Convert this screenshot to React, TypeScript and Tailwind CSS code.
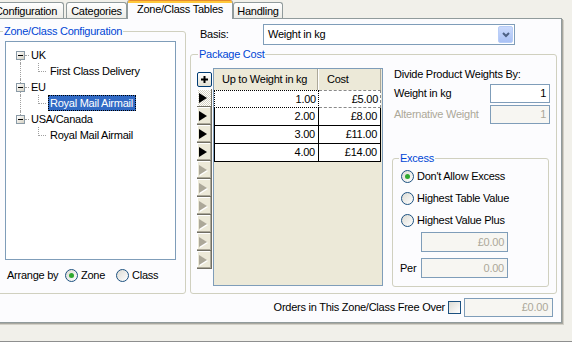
import React from "react";

const Radio = ({ checked }: { checked?: boolean }) => (
  <span className="w-[13px] h-[13px] rounded-full border border-[#1c5180] bg-linear-to-br from-[#dcdbd4] to-white flex items-center justify-center shrink-0">
    {checked && <span className="w-[5px] h-[5px] rounded-full bg-[#2fa82f]" />}
  </span>
);

const Legend = ({ children, left }: { children: React.ReactNode; left: string }) => (
  <span className={`absolute top-[-7px] ${left} px-[1px] h-[13px] leading-[13px] bg-[#fcfcfe] text-[#0046d5]`}>{children}</span>
);

const TreeText = ({ children, sel }: { children: React.ReactNode; sel?: boolean }) => (
  <span
    className={
      sel
        ? "h-[16px] pl-[1px] pr-[2px] flex items-center border border-dotted border-black bg-[#316ac5] text-white whitespace-nowrap"
        : "h-[16px] pl-[1px] pr-[2px] flex items-center border border-transparent whitespace-nowrap"
    }
  >
    {children}
  </span>
);

const RootRow = ({ label, up, down }: { label: string; up?: boolean; down?: boolean }) => (
  <div className="flex h-[16px] pl-[10px]">
    <div className="w-[9px] flex flex-col">
      <div className="h-[4px]">{up && <div className="ml-[4px] h-full border-l border-dotted border-[#a0a0a0]" />}</div>
      <div className="h-[9px] border border-[#8a9aa6] bg-linear-to-br from-white to-[#d4d0c2] flex items-center justify-center">
        <div className="w-[5px] h-[1px] bg-black" />
      </div>
      <div className="flex-1">{down && <div className="ml-[4px] h-full border-l border-dotted border-[#a0a0a0]" />}</div>
    </div>
    <div className="w-[4px] self-center border-t border-dotted border-[#a0a0a0]" />
    <TreeText>{label}</TreeText>
  </div>
);

const ChildRow = ({ label, cont, sel }: { label: string; cont?: boolean; sel?: boolean }) => (
  <div className="flex h-[16px] pl-[14px]">
    <div className={cont ? "w-[1px] h-full border-l border-dotted border-[#a0a0a0]" : "w-[1px]"} />
    <div className="w-[17px]" />
    <div className="w-[8px] h-[9px] self-start border-l border-b border-dotted border-[#a0a0a0]" />
    <div className="w-[2px]" />
    <TreeText sel={sel}>{label}</TreeText>
  </div>
);

const Arrow = ({ on, first }: { on?: boolean; first?: boolean }) => (
  <div
    className={
      first
        ? "w-[15px] h-[18px] flex items-center pl-[2px] bg-[image:repeating-conic-gradient(#ffffff_0_25%,#d6d2c2_0_50%)] bg-[length:2px_2px] shadow-[inset_-1px_-1px_0_#716f64,inset_1px_1px_0_#ffffff]"
        : "w-[15px] h-[18px] flex items-center pl-[2px] bg-[#ece9d8] shadow-[inset_-1px_-1px_0_#716f64,inset_-2px_-2px_0_#aca899,inset_1px_1px_0_#ffffff]"
    }
  >
    {on ? (
      <svg width="9" height="10" viewBox="0 0 9 10">
        <polygon points="0,0 8,5 0,10" fill="#000" />
      </svg>
    ) : (
      <svg width="10" height="11" viewBox="0 0 10 11">
        <polygon points="1,1 9,6 1,11" fill="#ffffff" />
        <polygon points="0,0 8,5 0,10" fill="#aca899" />
      </svg>
    )}
  </div>
);

const rows = [
  ["1.00", "£5.00"],
  ["2.00", "£8.00"],
  ["3.00", "£11.00"],
  ["4.00", "£14.00"],
];

export default function App() {
  return (
    <div className="w-[572px] h-[342px] overflow-hidden bg-[#f1f0ea] flex flex-col font-['Liberation_Sans',Arial,sans-serif] text-[11px] leading-[13px] tracking-[-0.25px] text-black">
      {/* tab strip */}
      <div className="flex items-end h-[19px] ml-[-12px] shrink-0">
        <div className="w-[76px] h-[17px] border border-b-0 border-[#919b9c] rounded-t-[3px] bg-linear-to-b from-white to-[#ecebe5] flex items-center justify-center">Configuration</div>
        <div className="ml-[2px] w-[61px] h-[17px] border border-b-0 border-[#919b9c] rounded-t-[3px] bg-linear-to-b from-white to-[#ecebe5] flex items-center justify-center">Categories</div>
        <div className="relative z-10 w-[106px] h-[19px] border-x border-[#919b9c] rounded-t-[3px] bg-[#fcfcfe] flex flex-col">
          <div className="h-[3px] rounded-t-[2px] bg-[#ffc83c] border-t border-[#e68b2c]" />
          <div className="flex-1 flex items-center justify-center pb-[3px]">Zone/Class Tables</div>
        </div>
        <div className="w-[50px] h-[17px] border border-b-0 border-[#919b9c] rounded-t-[3px] bg-linear-to-b from-white to-[#ecebe5] flex items-center justify-center">Handling</div>
      </div>

      {/* panel */}
      <div className="mt-[-1px] ml-[-10px] w-[572px] h-[305px] shrink-0 border border-[#919b9c] bg-[#fcfcfe] shadow-[1px_1px_0_#a8a79f,2px_2px_0_#d2d0c7] flex flex-col">
        <div className="flex items-start">
          {/* left group */}
          <div className="relative ml-[4px] mt-[12px] w-[191px] h-[263px] border border-[#d0d0bf] rounded-[3px] flex flex-col">
            <Legend left="left-[7px]">Zone/Class Configuration</Legend>
            <div className="ml-[9px] mt-[9px] w-[171px] h-[219px] border border-[#7f9db9] bg-white pt-[5px] flex flex-col">
              <RootRow label="UK" down />
              <ChildRow label="First Class Delivery" cont />
              <RootRow label="EU" up down />
              <ChildRow label="Royal Mail Airmail" cont sel />
              <RootRow label="USA/Canada" up />
              <ChildRow label="Royal Mail Airmail" />
            </div>
            <div className="ml-[11px] mt-[8px] h-[14px] flex items-center">
              <span className="w-[58px]">Arrange by</span>
              <Radio checked />
              <span className="ml-[3px] w-[35px]">Zone</span>
              <Radio />
              <span className="ml-[3px]">Class</span>
            </div>
          </div>

          {/* right column */}
          <div className="ml-[4px] mt-[5px] flex flex-col">
            <div className="flex items-center h-[21px]">
              <span className="ml-[10px] w-[63px]">Basis:</span>
              <div className="w-[252px] h-[21px] border border-[#7f9db9] bg-white flex items-stretch p-[1px]">
                <span className="flex-1 pl-[3px] flex items-center">Weight in kg</span>
                <div className="w-[15px] rounded-[2px] bg-linear-to-b from-[#cbdafc] to-[#a9c1f5] border border-[#b8cdf7] flex items-center justify-center">
                  <svg width="8" height="6" viewBox="0 0 8 6">
                    <path d="M1 1 L4 4 L7 1" fill="none" stroke="#4d6185" strokeWidth="2" />
                  </svg>
                </div>
              </div>
            </div>

            {/* package cost */}
            <div className="relative mt-[9px] w-[367px] h-[240px] border border-[#d0d0bf] rounded-[3px] flex items-start pl-[6px]">
              <Legend left="left-[7px]">Package Cost</Legend>
              <div className="mt-[17px] w-[15px] flex flex-col">
                <div className="w-[15px] h-[15px] border border-[#003c74] rounded-[2px] bg-linear-to-b from-white to-[#e3e0d3] flex items-center justify-center">
                  <svg width="7" height="7" viewBox="0 0 7 7">
                    <rect x="2.5" y="0" width="2" height="7" fill="#000" />
                    <rect x="0" y="2.5" width="7" height="2" fill="#000" />
                  </svg>
                </div>
                <div className="mt-[2px] flex flex-col">
                  <Arrow on first />
                  <Arrow on />
                  <Arrow on />
                  <Arrow on />
                  <Arrow />
                  <Arrow />
                  <Arrow />
                  <Arrow />
                  <Arrow />
                  <Arrow />
                </div>
              </div>

              {/* grid */}
              <div className="ml-[1px] mt-[13px] w-[170px] h-[218px] border border-[#7f9db9] bg-[#ece9d8] flex flex-col">
                <div className="flex h-[21px]">
                  <div className="w-[104px] pl-[8px] flex items-center border-r border-[#aca899] shadow-[1px_0_0_#ffffff]">Up to Weight in kg</div>
                  <div className="ml-[1px] w-[62px] pl-[8px] flex items-center border-r border-[#aca899]">Cost</div>
                </div>
                {rows.map((r, i) => (
                  <div key={i} className="flex h-[18px]">
                    <div
                      className={
                        i === 0
                          ? "w-[105px] border border-dotted border-black bg-white flex items-center justify-end pr-[2px]"
                          : "w-[105px] border-l border-r border-b border-black bg-white flex items-center justify-end pr-[3px]"
                      }
                    >
                      {r[0]}
                    </div>
                    <div
                      className={
                        i === 0
                          ? "w-[62px] border border-l-0 border-dashed border-[#8a8a8a] bg-white flex items-center justify-end pr-[2px]"
                          : "w-[62px] border-r border-b border-black bg-white flex items-center justify-end pr-[3px]"
                      }
                    >
                      {r[1]}
                    </div>
                  </div>
                ))}
              </div>

              {/* right side */}
              <div className="ml-[11px] mt-[12px] w-[156px] flex flex-col">
                <div className="h-[14px] flex items-center whitespace-nowrap">Divide Product Weights By:</div>
                <div className="mt-[3px] h-[19px] flex items-center justify-between">
                  <span>Weight in kg</span>
                  <div className="w-[60px] h-[19px] border border-[#7f9db9] bg-white flex items-center justify-end pr-[3px]">1</div>
                </div>
                <div className="mt-[2px] h-[19px] flex items-center justify-between">
                  <span className="text-[#aca899]">Alternative Weight</span>
                  <div className="w-[60px] h-[19px] border border-[#7f9db9] bg-[#f7f6f2] text-[#aca899] flex items-center justify-end pr-[3px]">1</div>
                </div>

                <div className="relative ml-[-2px] mt-[34px] w-[157px] h-[129px] border border-[#d0d0bf] rounded-[3px] flex flex-col pl-[8px]">
                  <Legend left="left-[6px]">Excess</Legend>
                  <div className="mt-[11px] h-[13px] flex items-center">
                    <Radio checked />
                    <span className="ml-[3px]">Don't Allow Excess</span>
                  </div>
                  <div className="mt-[9px] h-[13px] flex items-center">
                    <Radio />
                    <span className="ml-[3px]">Highest Table Value</span>
                  </div>
                  <div className="mt-[9px] h-[13px] flex items-center">
                    <Radio />
                    <span className="ml-[3px]">Highest Value Plus</span>
                  </div>
                  <div className="mt-[5px] ml-[20px] w-[87px] h-[20px] border border-[#7f9db9] bg-[#f7f6f2] text-[#aca899] flex items-center justify-end pr-[3px]">£0.00</div>
                  <div className="mt-[6px] ml-[-1px] h-[20px] flex items-center">
                    <span className="w-[21px]">Per</span>
                    <div className="w-[87px] h-[20px] border border-[#7f9db9] bg-[#f7f6f2] text-[#aca899] flex items-center justify-end pr-[3px]">0.00</div>
                  </div>
                </div>
              </div>
            </div>
          </div>
        </div>

        {/* orders row */}
        <div className="mt-[4px] h-[19px] flex items-center justify-end pr-[8px]">
          <span className="whitespace-nowrap">Orders in This Zone/Class Free Over</span>
          <span className="ml-[3px] w-[13px] h-[13px] border border-[#1c5180] bg-linear-to-br from-[#dcdbd4] to-white" />
          <div className="ml-[3px] w-[89px] h-[19px] border border-[#7f9db9] bg-[#f7f6f2] text-[#aca899] flex items-center justify-end pr-[4px]">£0.00</div>
        </div>
      </div>

      <div className="flex-1" />
      <div className="h-[1px] bg-[#8e8f8f] shrink-0" />
    </div>
  );
}
